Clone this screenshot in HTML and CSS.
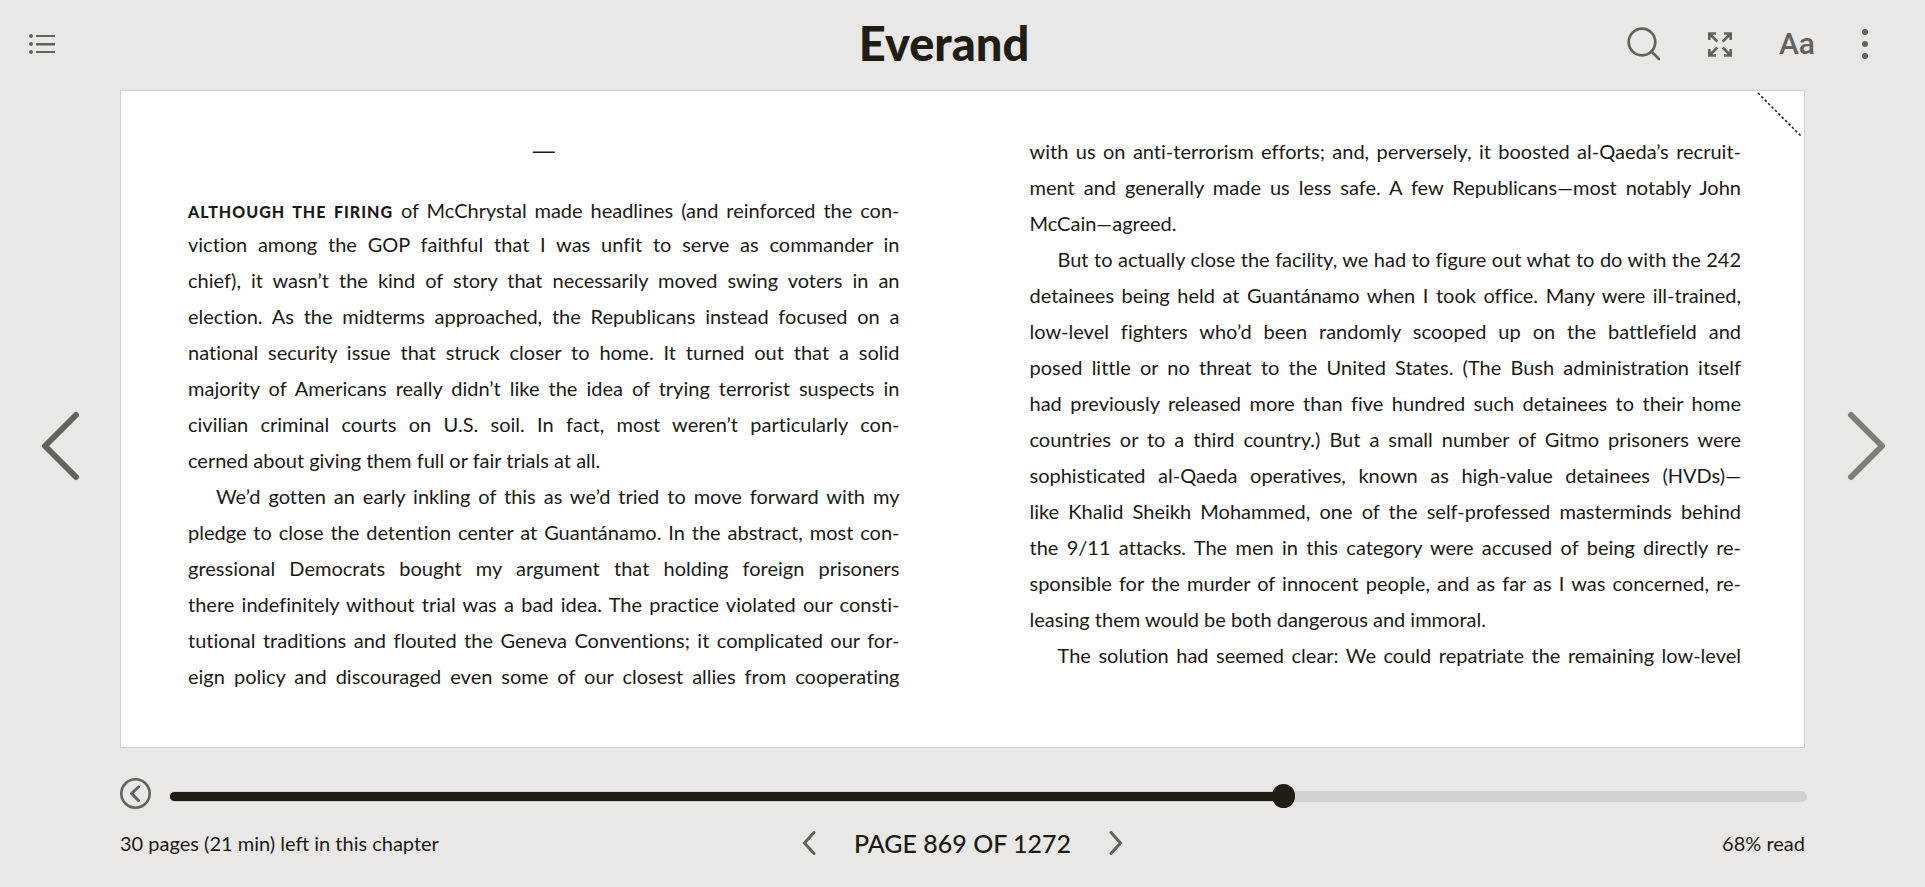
FILE: index.html
```html
<!DOCTYPE html>
<html lang="en">
<head>
<meta charset="utf-8">
<title>Everand</title>
<link rel="stylesheet" href="styles.css">
</head>
<body>
<header class="topbar">
  <button class="icon-button contents" aria-label="Table of contents">
    <svg width="28" height="20" viewBox="0 0 28 20"><g fill="currentColor"><circle cx="3" cy="2" r="2"/><circle cx="3" cy="10" r="2"/><circle cx="3" cy="18" r="2"/><rect x="8" y="1" width="19" height="2"/><rect x="8" y="9" width="19" height="2.500"/><rect x="8" y="17" width="19" height="2"/></g></svg>
  </button>
  <a class="logo" href="#">Everand</a>
  <nav class="tools" aria-label="Reader tools">
    <button class="icon-button" aria-label="Search">
      <svg width="34" height="34" viewBox="0 0 34 34" fill="none" stroke="currentColor" stroke-width="2.700" stroke-linecap="round"><circle cx="15" cy="15" r="13.300"/><path d="M24.500 24.500 32 32"/></svg>
    </button>
    <button class="icon-button" aria-label="Full screen">
      <svg width="24" height="25" viewBox="0 0 24 25" fill="none" stroke="currentColor" stroke-width="2.600"><path d="M1.300 8V1.500H8M1.300 1.500 9.300 9.500M16 1.500H22.700V8M22.700 1.500 14.700 9.500M1.300 17V23.500H8M1.300 23.500 9.300 15.500M16 23.500H22.700V17M22.700 23.500 14.700 15.500"/></svg>
    </button>
    <button class="icon-button text-size" aria-label="Display settings">Aa</button>
    <button class="icon-button" aria-label="More options">
      <svg width="6" height="30" viewBox="0 0 6 30" fill="currentColor"><circle cx="3" cy="3" r="3"/><circle cx="3" cy="15" r="3"/><circle cx="3" cy="27" r="3"/></svg>
    </button>
  </nav>
</header>
<main class="reader">
  <button class="turn" aria-label="Previous page">
    <svg width="40" height="70" viewBox="0 0 40 70"><path d="M35 4 4 35 35 66"/></svg>
  </button>
  <article class="spread">
    <button class="bookmark" aria-label="Bookmark this page">
      <svg width="46" height="46" viewBox="0 0 46 46"><path d="M1 1 45 45" stroke="#1c1a15" stroke-width="1.500" stroke-dasharray="2.600 2.200"/></svg>
    </button>
    <section class="column">
      <p class="divider">—</p>
      <p class="opening">
        <span class="line lead-line"><strong class="lead">ALTHOUGH THE FIRING</strong> of McChrystal made headlines (and reinforced the con-</span>
        <span class="line">viction among the GOP faithful that I was unfit to serve as commander in</span>
        <span class="line">chief), it wasn’t the kind of story that necessarily moved swing voters in an</span>
        <span class="line">election. As the midterms approached, the Republicans instead focused on a</span>
        <span class="line">national security issue that struck closer to home. It turned out that a solid</span>
        <span class="line">majority of Americans really didn’t like the idea of trying terrorist suspects in</span>
        <span class="line">civilian criminal courts on U.S. soil. In fact, most weren’t particularly con-</span>
        <span class="line end">cerned about giving them full or fair trials at all.</span>
      </p>
      <p>
        <span class="line indent">We’d gotten an early inkling of this as we’d tried to move forward with my</span>
        <span class="line">pledge to close the detention center at Guantánamo. In the abstract, most con-</span>
        <span class="line">gressional Democrats bought my argument that holding foreign prisoners</span>
        <span class="line">there indefinitely without trial was a bad idea. The practice violated our consti-</span>
        <span class="line">tutional traditions and flouted the Geneva Conventions; it complicated our for-</span>
        <span class="line">eign policy and discouraged even some of our closest allies from cooperating</span>
      </p>
    </section>
    <section class="column">
      <p>
        <span class="line">with us on anti-terrorism efforts; and, perversely, it boosted al-Qaeda’s recruit-</span>
        <span class="line">ment and generally made us less safe. A few Republicans—most notably John</span>
        <span class="line end">McCain—agreed.</span>
      </p>
      <p>
        <span class="line indent">But to actually close the facility, we had to figure out what to do with the 242</span>
        <span class="line">detainees being held at Guantánamo when I took office. Many were ill-trained,</span>
        <span class="line">low-level fighters who’d been randomly scooped up on the battlefield and</span>
        <span class="line">posed little or no threat to the United States. (The Bush administration itself</span>
        <span class="line">had previously released more than five hundred such detainees to their home</span>
        <span class="line">countries or to a third country.) But a small number of Gitmo prisoners were</span>
        <span class="line">sophisticated al-Qaeda operatives, known as high-value detainees (HVDs)—</span>
        <span class="line">like Khalid Sheikh Mohammed, one of the self-professed masterminds behind</span>
        <span class="line">the 9/11 attacks. The men in this category were accused of being directly re-</span>
        <span class="line">sponsible for the murder of innocent people, and as far as I was concerned, re-</span>
        <span class="line end">leasing them would be both dangerous and immoral.</span>
      </p>
      <p>
        <span class="line indent">The solution had seemed clear: We could repatriate the remaining low-level</span>
      </p>
    </section>
  </article>
  <button class="turn next" aria-label="Next page">
    <svg width="40" height="70" viewBox="0 0 40 70"><path d="M5 4 36 35 5 66"/></svg>
  </button>
</main>
<footer class="progress">
  <div class="scrub">
    <button class="icon-button" aria-label="Back to previous location">
      <svg width="31" height="31" viewBox="0 0 31 31" fill="none" stroke="currentColor" stroke-width="2.600"><circle cx="15.500" cy="15.500" r="14.200"/><path d="M18.500 9 11.500 15.500 18.500 22.500" stroke-width="3" stroke-linecap="round" stroke-linejoin="round"/></svg>
    </button>
    <input class="slider" type="range" min="1" max="1272" value="869" aria-label="Reading progress">
  </div>
  <div class="status">
    <span>30 pages (21 min) left in this chapter</span>
    <div class="pager">
      <button class="icon-button" aria-label="Back one page">
        <svg class="step" width="14" height="24" viewBox="0 0 14 24"><path d="M12 1.500 2.500 12 12 22.500"/></svg>
      </button>
      <button class="page-label">PAGE 869 OF 1272</button>
      <button class="icon-button" aria-label="Forward one page">
        <svg class="step" width="14" height="24" viewBox="0 0 14 24"><path d="M2 1.500 11.500 12 2 22.500"/></svg>
      </button>
    </div>
    <span class="percent">68% read</span>
  </div>
</footer>
</body>
</html>
```
FILE: styles.css
```css
* { box-sizing: border-box; }

body {
  margin: 0;
  min-height: 100vh;
  display: flex;
  flex-direction: column;
  background: #e9e8e6;
  color: #1c1a15;
  font-family: Lato, "Open Sans", sans-serif;
}

button {
  margin: 0;
  padding: 0;
  border: 0;
  background: none;
  color: inherit;
  font: inherit;
  cursor: pointer;
}

svg { display: block; }

.icon-button { color: #65625c; }

.topbar {
  height: 90px;
  padding: 0 57px 2px 20px;
  display: grid;
  grid-template-columns: 1fr auto 1fr;
  align-items: center;
}

.contents {
  justify-self: start;
  padding-left: 8px;
}

.logo {
  padding-bottom: 2px;
  color: #211c14;
  font-size: 47px;
  font-weight: 900;
  line-height: 60px;
  text-decoration: none;
}

.tools {
  display: flex;
  justify-content: flex-end;
  align-items: center;
  gap: 47px;
}

.text-size {
  font-family: Roboto, sans-serif;
  font-size: 30px;
  font-weight: 500;
  line-height: 36px;
}

.reader {
  flex: 1;
  display: grid;
  grid-template-columns: 120px minmax(0, 1fr) 120px;
}

.turn {
  padding: 54px 0 0 41px;
  display: flex;
  align-items: center;
  color: #65625c;
}

.turn path {
  fill: none;
  stroke: currentColor;
  stroke-width: 6;
  stroke-linecap: round;
  stroke-linejoin: round;
}

.next { color: #807d78; }

.spread {
  position: relative;
  padding: 42px 63px 24px 67px;
  display: grid;
  grid-template-columns: minmax(0, 1fr) minmax(0, 1fr);
  gap: 130px;
  background: #fff;
  border: 1px solid #d2d1cf;
  font-size: 20px;
  font-variant-ligatures: none;
  line-height: 36px;
}

.bookmark {
  position: absolute;
  top: 1px;
  right: 1px;
}

.column p { margin: 0; }

.column .divider {
  font-family: "Liberation Sans", sans-serif;
  font-size: 22px;
  text-align: center;
}

.column .opening { margin-top: 25px; }

.line {
  display: block;
  white-space: nowrap;
  text-align-last: justify;
}

.indent { padding-left: 28px; }

.end { text-align-last: left; }

.lead-line { line-height: 32px; }

.lead {
  font-size: 16px;
  font-weight: 900;
  letter-spacing: 1px;
  line-height: 16px;
}

.progress {
  height: 139px;
  padding: 30px 118px 0 120px;
}

.scrub {
  display: flex;
  align-items: center;
  gap: 18px;
}

.slider {
  flex: 1;
  height: 24px;
  margin: 6px 0 0;
  appearance: none;
  background: none;
}

.slider::-webkit-slider-runnable-track {
  height: 11px;
  border: 1px solid #d2d1cf;
  border-radius: 6px;
  background: linear-gradient(to right, #211c14 68%, #d2d1cf 68%);
}

.slider::-webkit-slider-thumb {
  appearance: none;
  width: 23px;
  height: 24px;
  margin-top: -8px;
  border-radius: 12px;
  background: #211c14;
}

.status {
  margin-top: 18px;
  padding-right: 2px;
  display: grid;
  grid-template-columns: 1fr auto 1fr;
  align-items: center;
  font-size: 20px;
  line-height: 32px;
}

.pager {
  display: flex;
  align-items: center;
  gap: 38px;
}

.step {
  fill: none;
  stroke: currentColor;
  stroke-width: 3;
  stroke-linecap: round;
}

.page-label {
  font-size: 25px;
  font-weight: 500;
}

.percent { text-align: right; }
```
